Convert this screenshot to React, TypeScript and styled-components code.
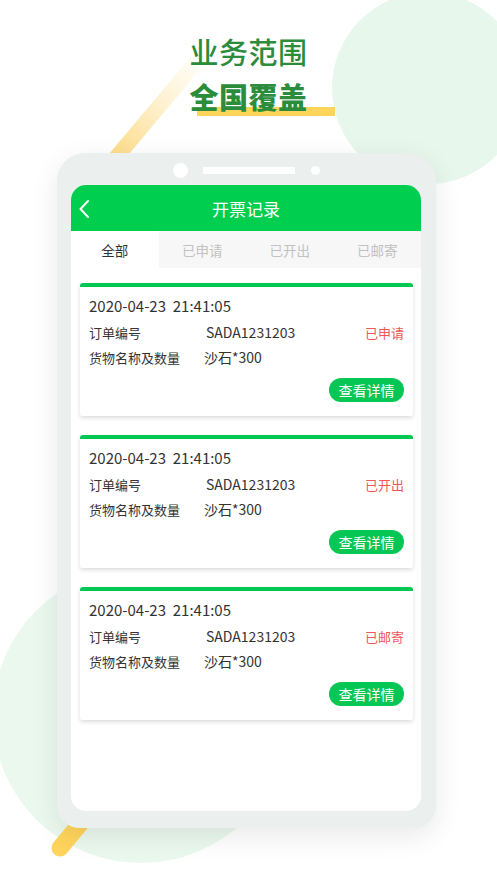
import React from "react";
import styled, { createGlobalStyle } from "styled-components";

const GlobalStyle = createGlobalStyle`
  html, body { margin: 0; padding: 0; background: #ffffff; }
  body { font-family: "Noto Sans CJK SC", "Noto Sans", sans-serif; }
  * { box-sizing: border-box; }
`;

const Page = styled.div`
  position: relative;
  width: 497px;
  height: 883px;
  overflow: hidden;
  background: #ffffff;
`;

const Decor = styled.svg`
  position: absolute;
  left: 0;
  top: 0;
  width: 497px;
  height: 883px;
  z-index: 0;
`;

const Content = styled.div`
  position: relative;
  z-index: 1;
  display: flex;
  flex-direction: column;
  align-items: center;
  padding-top: 29px;
`;

const Headline = styled.div`
  display: flex;
  flex-direction: column;
  align-items: center;
  color: #2b8c3c;
  font-size: 29px;
  line-height: 45px;
  letter-spacing: 0.5px;
`;

const HeadLine1 = styled.div`
  font-weight: 500;
`;

const HeadLine2 = styled.div`
  position: relative;
  font-weight: 900;
`;

const HeadText = styled.span`
  position: relative;
  z-index: 1;
`;

const Underline = styled.span`
  position: absolute;
  left: 8px;
  top: 33px;
  width: 138px;
  height: 9px;
  background: #ffd45a;
  z-index: 0;
`;

const Phone = styled.div`
  margin-top: 34px;
  margin-right: 4px;
  width: 379px;
  height: 675px;
  background: #ebefee;
  border-radius: 28px 28px 22px 22px;
  box-shadow: 0 8px 28px rgba(0, 0, 0, 0.09);
  display: flex;
  flex-direction: column;
  padding: 0 15px 17px 14px;
`;

const Notch = styled.div`
  height: 32px;
  display: flex;
  align-items: center;
  justify-content: center;
  padding-top: 2px;
`;

const Camera = styled.span`
  width: 15px;
  height: 15px;
  border-radius: 50%;
  background: #ffffff;
`;

const Speaker = styled.span`
  width: 92px;
  height: 7px;
  margin: 0 16px 0 15px;
  background: #ffffff;
`;

const Sensor = styled.span`
  width: 9px;
  height: 9px;
  border-radius: 50%;
  background: #ffffff;
`;

const Screen = styled.div`
  flex: 1;
  background: #ffffff;
  border-radius: 15px;
  overflow: hidden;
  display: flex;
  flex-direction: column;
`;

const NavBar = styled.div`
  position: relative;
  height: 46px;
  background: #00ce4f;
  display: flex;
  align-items: center;
  justify-content: center;
  color: #ffffff;
  font-size: 17px;
`;

const BackButton = styled.svg`
  position: absolute;
  left: 8px;
  top: 15px;
`;

const Tabs = styled.div`
  height: 37px;
  display: grid;
  grid-template-columns: repeat(4, 1fr);
  background: #f7f7f7;
`;

const Tab = styled.div<{ $active?: boolean }>`
  display: flex;
  align-items: center;
  justify-content: center;
  font-size: 13.5px;
  color: ${(p) => (p.$active ? "#333333" : "#c2c2c2")};
  background: ${(p) => (p.$active ? "#ffffff" : "transparent")};
`;

const List = styled.div`
  display: flex;
  flex-direction: column;
  gap: 19px;
  padding: 15px 8px 0 9px;
`;

const Card = styled.div`
  background: #ffffff;
  border-top: 4px solid #00c853;
  border-radius: 3px 3px 2px 2px;
  box-shadow: 0 2px 4px rgba(0, 0, 0, 0.14);
  padding: 9px 9px 14px 9px;
  display: flex;
  flex-direction: column;
`;

const DateLine = styled.div`
  font-size: 15px;
  line-height: 20px;
  color: #333333;
  white-space: pre;
`;

const Row = styled.div<{ $gap: number }>`
  margin-top: ${(p) => p.$gap}px;
  display: flex;
  align-items: center;
  height: 20px;
  font-size: 13px;
  color: #333333;
`;

const Label = styled.span`
  width: 117px;
`;

const Value = styled.span<{ $shift?: number }>`
  flex: 1;
  font-size: 14px;
  margin-left: ${(p) => p.$shift ?? 0}px;
`;

const Status = styled.span`
  font-size: 13px;
  color: #ef5656;
`;

const Actions = styled.div`
  margin-top: 11px;
  display: flex;
  justify-content: flex-end;
`;

const DetailButton = styled.button`
  width: 75px;
  height: 24px;
  border: none;
  border-radius: 12px;
  background: #06c755;
  color: #ffffff;
  font-family: "Noto Sans CJK SC", sans-serif;
  font-size: 14px;
  padding: 0;
  line-height: 24px;
`;

const records = [
  { status: "已申请" },
  { status: "已开出" },
  { status: "已邮寄" },
];

const tabs = ["全部", "已申请", "已开出", "已邮寄"];

export default function App() {
  return (
    <>
      <GlobalStyle />
      <Page>
        <Decor viewBox="0 0 497 883">
          <defs>
            <linearGradient id="stripeFade" x1="112" y1="153" x2="200" y2="52" gradientUnits="userSpaceOnUse">
              <stop offset="0" stopColor="#fdd46e" stopOpacity="0.8" />
              <stop offset="0.55" stopColor="#fdd46e" stopOpacity="0.3" />
              <stop offset="1" stopColor="#fdd46e" stopOpacity="0" />
            </linearGradient>
          </defs>
          <circle cx="428" cy="88" r="96" fill="#e8f7ec" />
          <circle cx="141" cy="715" r="148" fill="#ebf8ee" />
          <polygon points="104,160 124,160 218,48 198,48" fill="url(#stripeFade)" />
          <line x1="60" y1="848" x2="120" y2="776" stroke="#ffd45c" strokeWidth="17" strokeLinecap="round" />
        </Decor>
        <Content>
          <Headline>
            <HeadLine1>业务范围</HeadLine1>
            <HeadLine2>
              <Underline />
              <HeadText>全国覆盖</HeadText>
            </HeadLine2>
          </Headline>
          <Phone>
            <Notch>
              <Camera />
              <Speaker />
              <Sensor />
            </Notch>
            <Screen>
              <NavBar>
                <BackButton width="12" height="18" viewBox="0 0 12 18">
                  <polyline points="9,1 1.5,9 9,17" fill="none" stroke="#ffffff" strokeWidth="2" strokeLinecap="round" strokeLinejoin="round" />
                </BackButton>
                开票记录
              </NavBar>
              <Tabs>
                {tabs.map((t, i) => (
                  <Tab key={t} $active={i === 0}>
                    {t}
                  </Tab>
                ))}
              </Tabs>
              <List>
                {records.map((r) => (
                  <Card key={r.status}>
                    <DateLine>{"2020-04-23  21:41:05"}</DateLine>
                    <Row $gap={6}>
                      <Label>订单编号</Label>
                      <Value>SADA1231203</Value>
                      <Status>{r.status}</Status>
                    </Row>
                    <Row $gap={5}>
                      <Label>货物名称及数量</Label>
                      <Value $shift={-2}>沙石*300</Value>
                    </Row>
                    <Actions>
                      <DetailButton>查看详情</DetailButton>
                    </Actions>
                  </Card>
                ))}
              </List>
            </Screen>
          </Phone>
        </Content>
      </Page>
    </>
  );
}
